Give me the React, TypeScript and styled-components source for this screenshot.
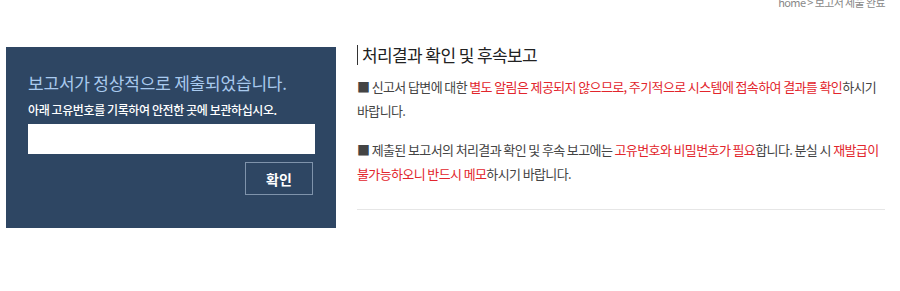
import styled, { createGlobalStyle } from "styled-components";

const GlobalStyle = createGlobalStyle`
  html, body {
    margin: 0;
    padding: 0;
    background: #fff;
  }
  body {
    font-family: "Noto Sans CJK KR", "Noto Sans", sans-serif;
    color: #333;
    overflow: hidden;
  }
`;

const Page = styled.div`
  width: 900px;
  height: 291px;
  overflow: hidden;
`;

const Breadcrumb = styled.div`
  margin-top: -4px;
  padding-right: 15px;
  text-align: right;
  font-size: 11px;
  line-height: 12px;
  letter-spacing: -0.6px;
  color: #888;
`;

const Content = styled.div`
  display: flex;
  align-items: flex-start;
  gap: 21px;
  margin-top: 37px;
  padding-left: 6px;
`;

const Panel = styled.section`
  box-sizing: border-box;
  width: 330px;
  height: 181px;
  margin-top: 2px;
  padding: 25px 21px 0 22px;
  background: #2e4663;
  display: flex;
  flex-direction: column;
`;

const PanelTitle = styled.h2`
  margin: 0;
  font-size: 17px;
  font-weight: 400;
  line-height: 22px;
  letter-spacing: -0.2px;
  color: #a9caee;
`;

const PanelText = styled.p`
  margin: 7px 0 0;
  font-size: 12px;
  font-weight: 500;
  line-height: 18px;
  letter-spacing: -0.4px;
  color: #fff;
`;

const CodeInput = styled.input`
  box-sizing: border-box;
  margin-top: 5px;
  width: 100%;
  height: 30px;
  border: none;
  outline: none;
  background: #fff;
  padding: 0 8px;
  font-family: inherit;
`;

const ConfirmButton = styled.button`
  align-self: flex-end;
  box-sizing: border-box;
  margin: 8px 2px 0 0;
  width: 68px;
  height: 33px;
  background: transparent;
  border: 1px solid #7f93ab;
  color: #fff;
  font-family: inherit;
  font-size: 14px;
  font-weight: 700;
  cursor: pointer;
`;

const Guide = styled.section`
  box-sizing: border-box;
  width: 528px;
  padding-bottom: 23px;
  border-bottom: 1px solid #e6e6e6;
`;

const GuideTitle = styled.h3`
  margin: 0;
  padding-left: 4px;
  border-left: 1px solid #333;
  font-size: 17px;
  font-weight: 400;
  line-height: 20px;
  letter-spacing: -0.6px;
  color: #222;
`;

const Note = styled.p<{ $first?: boolean }>`
  margin: ${(p) => (p.$first ? "10px" : "15px")} 0 0;
  font-size: 13px;
  line-height: 24px;
  letter-spacing: -0.62px;
  word-break: keep-all;
  color: #444;
`;

const Red = styled.span`
  color: #e2252c;
`;

export default function App() {
  return (
    <Page>
      <GlobalStyle />
      <Breadcrumb>home &gt; 보고서 제출 완료</Breadcrumb>
      <Content>
        <Panel>
          <PanelTitle>보고서가 정상적으로 제출되었습니다.</PanelTitle>
          <PanelText>아래 고유번호를 기록하여 안전한 곳에 보관하십시오.</PanelText>
          <CodeInput type="text" readOnly />
          <ConfirmButton type="button">확인</ConfirmButton>
        </Panel>
        <Guide>
          <GuideTitle>처리결과 확인 및 후속보고</GuideTitle>
          <Note $first>
            ■ 신고서 답변에 대한{" "}
            <Red>별도 알림은 제공되지 않으므로, 주기적으로 시스템에 접속하여 결과를 확인</Red>
            하시기 바랍니다.
          </Note>
          <Note>
            ■ 제출된 보고서의 처리결과 확인 및 후속 보고에는{" "}
            <Red>고유번호와 비밀번호가 필요</Red>합니다. 분실 시{" "}
            <Red>재발급이 불가능하오니 반드시 메모</Red>하시기 바랍니다.
          </Note>
        </Guide>
      </Content>
    </Page>
  );
}
